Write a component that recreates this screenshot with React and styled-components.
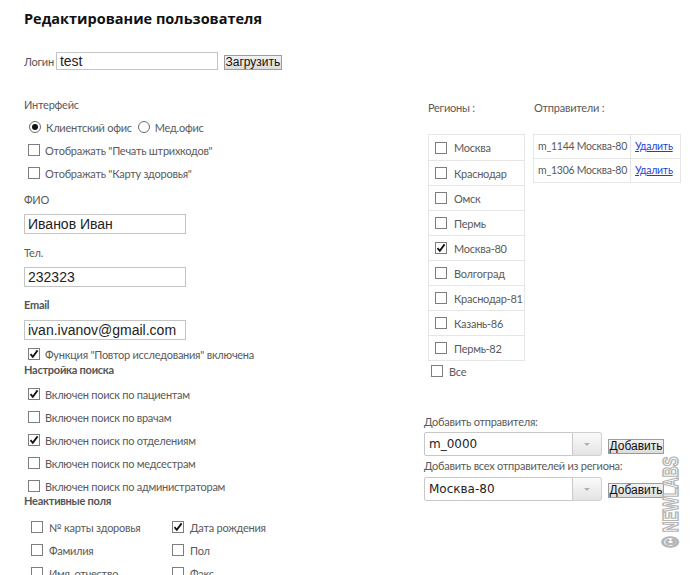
import React from 'react'
import styled, { createGlobalStyle } from 'styled-components'

const GlobalStyle = createGlobalStyle`
	html, body {
		margin: 0;
		padding: 0;
		background: #fff;
	}
	body {
		font-family: Lato, "Open Sans", sans-serif;
		letter-spacing: -0.25px;
		color: #555;
	}
`

const Page = styled.div`
	position: relative;
	width: 700px;
	height: 575px;
	overflow: hidden;
	padding-left: 24px;
	box-sizing: border-box;
`

const Title = styled.h1`
	margin: 7px 0 0;
	height: 24px;
	line-height: 24px;
	font-family: "Open Sans", sans-serif;
	font-size: 14.5px;
	font-weight: 700;
	letter-spacing: 0;
	color: #111;
`

const LoginRow = styled.div`
	display: flex;
	align-items: center;
	margin-top: 21px;
	height: 18px;
	font-size: 11px;
`

const TextBox = styled.div`
	box-sizing: border-box;
	width: ${p => p.$w || 162}px;
	height: ${p => p.$h || 20}px;
	margin-top: ${p => p.$mt || 0}px;
	margin-left: ${p => p.$ml || 0}px;
	border: 1px solid #c4c4c4;
	padding: 0 3px;
	font-family: "Liberation Sans", Arial, sans-serif;
	font-size: 14px;
	letter-spacing: 0;
	line-height: ${p => (p.$h || 20) - 2}px;
	color: #222;
`

const OldButton = styled.div`
	box-sizing: border-box;
	height: 15px;
	width: ${p => p.$w}px;
	margin-left: ${p => p.$ml || 6}px;
	margin-top: ${p => p.$mt || 0}px;
	border: 1px solid #9c9c9c;
	background: linear-gradient(#f2f2f2, #dcdcdc);
	font-family: "Liberation Sans", Arial, sans-serif;
	font-size: 12px;
	letter-spacing: 0;
	line-height: 13px;
	text-align: center;
	color: #111;
`

const Columns = styled.div`
	display: grid;
	grid-template-columns: 400px 1fr;
	margin-top: 28px;
`

const Column = styled.div`
	display: flex;
	flex-direction: column;
	align-items: flex-start;
`

const Label = styled.div`
	font-size: 11px;
	line-height: 14px;
	height: 14px;
	margin-top: ${p => p.$mt || 0}px;
	margin-left: ${p => p.$ml || 0}px;
	font-weight: ${p => (p.$bold ? 700 : 400)};
	color: ${p => (p.$bold ? '#555' : '#5a5a5a')};
	white-space: nowrap;
`

const Group = styled.div`
	display: flex;
	flex-direction: column;
	gap: 7px;
	margin-top: ${p => p.$mt || 0}px;
	padding-left: ${p => p.$pl ?? 4}px;
`

const Grid2 = styled.div`
	display: grid;
	grid-template-columns: 141px 141px;
	row-gap: 7px;
	margin-top: ${p => p.$mt || 0}px;
	padding-left: 7px;
`

const Row = styled.div`
	display: flex;
	align-items: center;
	height: 16px;
	font-size: 11px;
	color: #5a5a5a;
	white-space: nowrap;
`

const Box = styled.span`
	box-sizing: border-box;
	width: 12px;
	height: 12px;
	flex: none;
	border: 1px solid #7d7d7d;
	background: #fff;
	margin-right: ${p => p.$gap || 5}px;
	display: flex;
	align-items: center;
	justify-content: center;
`

const Radio = styled.span`
	box-sizing: border-box;
	width: 12px;
	height: 12px;
	flex: none;
	border: 1px solid #6a6a6a;
	border-radius: 50%;
	background: #fff;
	margin-right: 5px;
	margin-left: ${p => p.$ml || 0}px;
	display: flex;
	align-items: center;
	justify-content: center;
	&::after {
		content: '';
		display: ${p => (p.$on ? 'block' : 'none')};
		width: 6px;
		height: 6px;
		border-radius: 50%;
		background: #111;
	}
`

const Check = ({ on, gap }) => (
	<Box $gap={gap}>
		{on && (
			<svg width="10" height="10" viewBox="0 0 10 10">
				<path d="M1.5 5.2 L3.8 7.8 L8.6 1.4" fill="none" stroke="#111" strokeWidth="1.8" />
			</svg>
		)}
	</Box>
)

const CheckRow = ({ on, children, gap }) => (
	<Row>
		<Check on={on} gap={gap} />
		{children}
	</Row>
)

const RightHead = styled.div`
	display: flex;
	margin-top: 3px;
	padding-left: 4px;
	font-size: 11px;
	line-height: 14px;
	color: #5a5a5a;
	& > span:first-child {
		width: 106px;
	}
`

const Tables = styled.div`
	display: flex;
	align-items: flex-start;
	gap: 8px;
	margin-top: 19px;
	padding-left: 4px;
`

const RegionTable = styled.div`
	width: 97px;
	border: 1px solid #e6e6e6;
	box-sizing: border-box;
`

const RegionCell = styled.div`
	display: flex;
	align-items: center;
	height: 25px;
	padding-left: 6px;
	box-sizing: border-box;
	font-size: 11px;
	color: #5a5a5a;
	& + & {
		border-top: 1px solid #e6e6e6;
	}
`

const SenderTable = styled.div`
	display: grid;
	grid-template-columns: 96px 50px;
	border: 1px solid #e6e6e6;
`

const SenderCell = styled.div`
	height: 23px;
	line-height: 23px;
	padding-left: 4px;
	font-size: 10.5px;
	color: #5a5a5a;
	white-space: nowrap;
	border-left: ${p => (p.$link ? '1px solid #e6e6e6' : 'none')};
	border-top: ${p => (p.$first ? 'none' : '1px solid #e6e6e6')};
`

const Link = styled.a`
	color: #1f3fd0;
	text-decoration: underline;
`

const AllRow = styled.div`
	margin-top: 2px;
	padding-left: 7px;
`

const ComboRow = styled.div`
	display: flex;
	align-items: flex-start;
	margin-top: ${p => p.$mt || 0}px;
`

const Combo = styled.div`
	display: flex;
	height: 24px;
	width: 178px;
`

const ComboValue = styled.div`
	flex: 1;
	box-sizing: border-box;
	border: 1px solid #c8c8c8;
	border-radius: 2px 0 0 2px;
	padding-left: 4px;
	font-family: "DejaVu Sans", Verdana, sans-serif;
	font-size: 12px;
	letter-spacing: 0;
	line-height: 22px;
	color: #222;
`

const ComboArrow = styled.div`
	width: 29px;
	box-sizing: border-box;
	border: 1px solid #d0d0d0;
	border-left: none;
	border-radius: 0 3px 3px 0;
	background: linear-gradient(#fafafa, #e4e4e4);
	display: flex;
	align-items: center;
	justify-content: center;
	&::after {
		content: '';
		border-left: 3px solid transparent;
		border-right: 3px solid transparent;
		border-top: 3px solid #b0b0b0;
	}
`

const Watermark = styled.div`
	position: absolute;
	left: 623px;
	top: 494px;
	width: 94px;
	height: 16px;
	line-height: 16px;
	text-align: center;
	font-family: "Liberation Sans", Arial, sans-serif;
	font-weight: 700;
	font-size: 15px;
	letter-spacing: 0;
	color: #fff;
	-webkit-text-stroke: 1px #b4b4b4;
	white-space: nowrap;
	transform: rotate(-90deg) scaleY(1.5);
`

const regions = [
	['Москва', false],
	['Краснодар', false],
	['Омск', false],
	['Пермь', false],
	['Москва-80', true],
	['Волгоград', false],
	['Краснодар-81', false],
	['Казань-86', false],
	['Пермь-82', false],
]

const senders = ['m_1144 Москва-80', 'm_1306 Москва-80']

export default function App() {
	return (
		<Page>
			<GlobalStyle />
			<Title>Редактирование пользователя</Title>
			<LoginRow>
				<span>Логин</span>
				<TextBox $w={162} $h={18} $ml={2}>test</TextBox>
				<OldButton $w={58} $mt={2}>Загрузить</OldButton>
			</LoginRow>
			<Columns>
				<Column>
					<Label>Интерфейс</Label>
					<Group $mt={7}>
						<Row>
							<Radio $on $ml={1} />
							Клиентский офис
							<Radio $ml={6} />
							Мед.офис
						</Row>
						<CheckRow>Отображать "Печать штрихкодов"</CheckRow>
						<CheckRow>Отображать "Карту здоровья"</CheckRow>
					</Group>
					<Label $mt={12}>ФИО</Label>
					<TextBox $mt={7}>Иванов Иван</TextBox>
					<Label $mt={12}>Тел.</Label>
					<TextBox $mt={7}>232323</TextBox>
					<Label $mt={11} $bold>Email</Label>
					<TextBox $mt={8}>ivan.ivanov@gmail.com</TextBox>
					<Group $mt={6}>
						<CheckRow on>Функция "Повтор исследования" включена</CheckRow>
					</Group>
					<Label $mt={1} $bold>Настройка поиска</Label>
					<Group $mt={9}>
						<CheckRow on>Включен поиск по пациентам</CheckRow>
						<CheckRow>Включен поиск по врачам</CheckRow>
						<CheckRow on>Включен поиск по отделениям</CheckRow>
						<CheckRow>Включен поиск по медсестрам</CheckRow>
						<CheckRow>Включен поиск по администраторам</CheckRow>
					</Group>
					<Label $bold>Неактивные поля</Label>
					<Grid2 $mt={11}>
						<CheckRow gap={6}>№ карты здоровья</CheckRow>
						<CheckRow gap={6} on>Дата рождения</CheckRow>
						<CheckRow gap={6}>Фамилия</CheckRow>
						<CheckRow gap={6}>Пол</CheckRow>
						<CheckRow gap={6}>Имя, отчество</CheckRow>
						<CheckRow gap={6}>Факс</CheckRow>
					</Grid2>
				</Column>
				<Column>
					<RightHead>
						<span>Регионы :</span>
						<span>Отправители :</span>
					</RightHead>
					<Tables>
						<RegionTable>
							{regions.map(([name, on]) => (
								<RegionCell key={name}>
									<Check on={on} gap={7} />
									{name}
								</RegionCell>
							))}
						</RegionTable>
						<SenderTable>
							{senders.map((s, i) => (
								<React.Fragment key={s}>
									<SenderCell $first={i === 0}>{s}</SenderCell>
									<SenderCell $first={i === 0} $link>
										<Link href="#">Удалить</Link>
									</SenderCell>
								</React.Fragment>
							))}
						</SenderTable>
					</Tables>
					<AllRow>
						<CheckRow gap={6}>Все</CheckRow>
					</AllRow>
					<Label $mt={36}>Добавить отправителя:</Label>
					<ComboRow $mt={3}>
						<Combo>
							<ComboValue>m_0000</ComboValue>
							<ComboArrow />
						</Combo>
						<OldButton $w={56} $mt={7}>Добавить</OldButton>
					</ComboRow>
					<Label $mt={3}>Добавить всех отправителей из региона:</Label>
					<ComboRow $mt={4}>
						<Combo>
							<ComboValue>Москва-80</ComboValue>
							<ComboArrow />
						</Combo>
						<OldButton $w={56} $mt={6}>Добавить</OldButton>
					</ComboRow>
				</Column>
			</Columns>
			<Watermark>© NEWLABS</Watermark>
		</Page>
	)
}
